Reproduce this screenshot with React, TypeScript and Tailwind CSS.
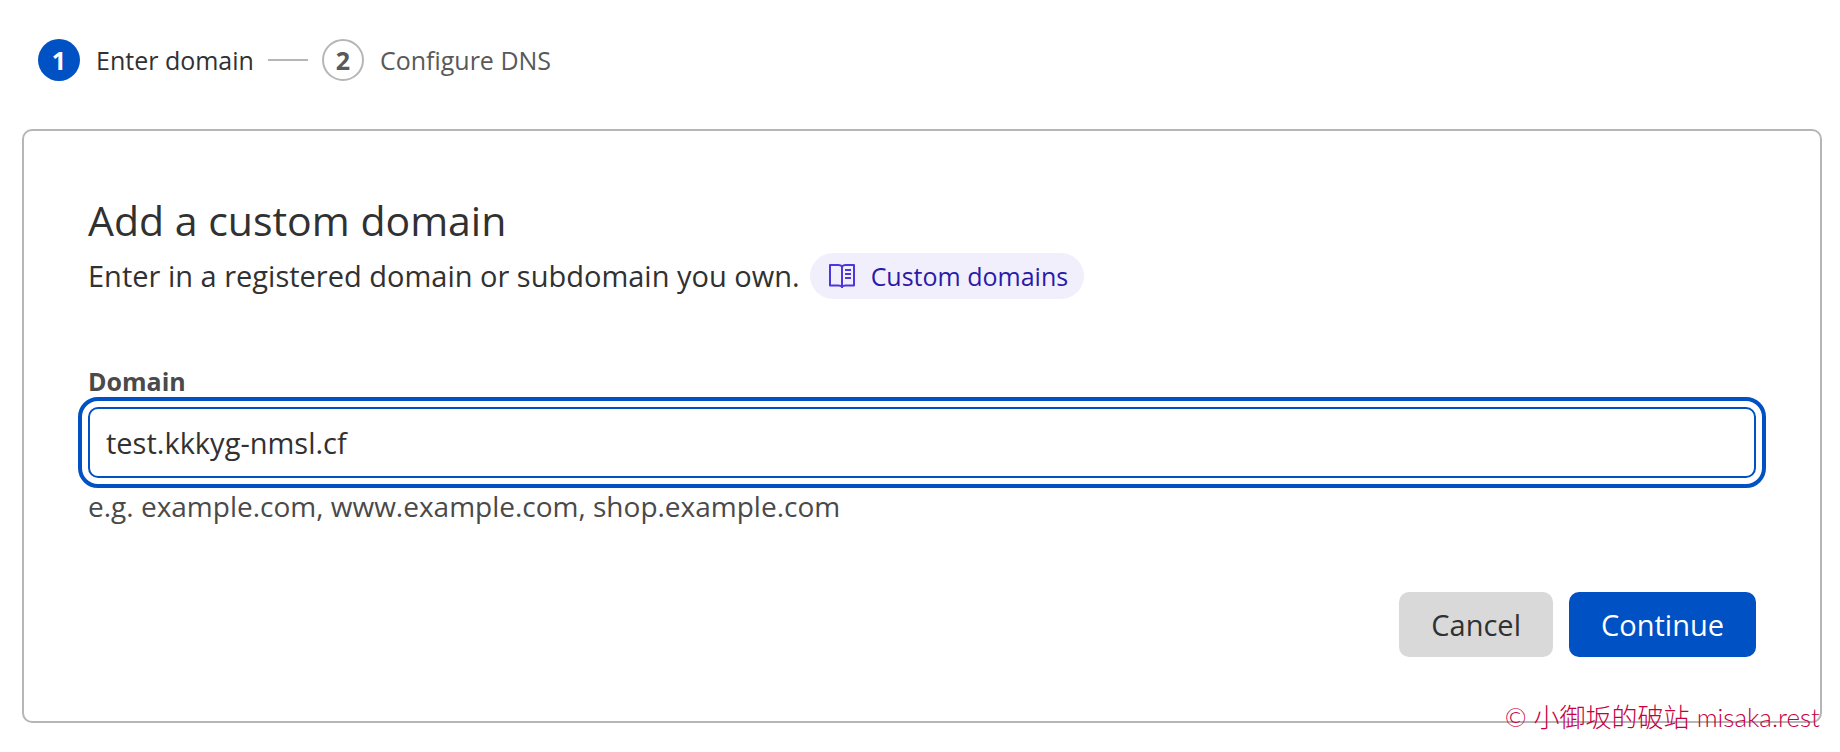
import { useState } from "react";

function BookIcon() {
  return (
    <svg
      viewBox="0 0 26 26"
      className="size-[26px] shrink-0"
      fill="none"
      stroke="#4c36dd"
      strokeWidth="2"
      strokeLinejoin="round"
      aria-hidden="true"
    >
      <path d="M13 3.500C12 2.300 11 2 9.500 2H1v20.500h8.500c1.500 0 2.700.2 3.500 1.200.8-1 2-1.200 3.500-1.200H25V2h-8.500C15 2 14 2.300 13 3.500Z" />
      <path d="M13 3v22" />
      <path d="M16 7h6M16 11h6M16 15h6" />
    </svg>
  );
}

export default function App() {
  const [domain, setDomain] = useState("test.kkkyg-nmsl.cf");

  return (
    <div className="bg-white pt-[39px] pr-[18px] pb-[29px] pl-[22px] font-['Open_Sans','Noto_Sans_CJK_SC',sans-serif] text-[29px] leading-[40px] text-[#313131]">
      <ol className="flex items-center gap-3.5 pl-4 text-[25px]">
        <li className="flex items-center gap-4" aria-current="step">
          <span className="flex size-[42px] items-center justify-center rounded-full bg-[#0051c3] font-bold text-white">
            1
          </span>
          Enter domain
        </li>
        <li aria-hidden="true" className="h-[2px] w-10 bg-[#b6b6b6]" />
        <li className="flex items-center gap-4 text-[#595959]">
          <span className="flex size-[42px] items-center justify-center rounded-full border-2 border-[#b6b6b6] font-bold">
            2
          </span>
          Configure DNS
        </li>
      </ol>

      <main className="relative mt-12 rounded-[10px] border-2 border-[#b6b6b6] p-16">
        <h1 className="text-[41px] leading-[50px]">Add a custom domain</h1>
        <div className="mt-2 flex items-center gap-2.5">
          <p>Enter in a registered domain or subdomain you own.</p>
          <a
            href="#custom-domains"
            className="flex h-[46px] items-center gap-4 rounded-full bg-[#f2effd] pr-4 pl-[19px] text-[25px] text-[#2b1aa8]"
          >
            <BookIcon />
            Custom domains
          </a>
        </div>

        <form className="mt-[62px]" onSubmit={(event) => event.preventDefault()}>
          <label htmlFor="domain" className="block text-[25px] font-bold text-[#4a4a4a]">
            Domain
          </label>
          <input
            id="domain"
            type="text"
            value={domain}
            onChange={(event) => setDomain(event.target.value)}
            aria-describedby="domain-hint"
            className="mt-1.5 block h-[71px] w-full rounded-[10px] border-2 border-[#0051c3] px-4 outline-4 outline-offset-[6px] outline-[#0051c3]"
          />
          <p id="domain-hint" className="mt-2 text-[28px] leading-[40px] text-[#4a4a4a]">
            e.g. example.com, www.example.com, shop.example.com
          </p>
          <div className="mt-[66px] flex justify-end gap-4">
            <button type="button" className="h-[65px] rounded-[10px] bg-[#d9d9d9] px-8">
              Cancel
            </button>
            <button type="submit" className="h-[65px] rounded-[10px] bg-[#0051c3] px-8 text-white">
              Continue
            </button>
          </div>
        </form>

        <small className="absolute right-0 -bottom-4 font-['Lato','Noto_Sans_CJK_SC',sans-serif] text-[26px] font-light text-[#c7003f]">
          © 小御坂的破站 misaka.rest
        </small>
      </main>
    </div>
  );
}
